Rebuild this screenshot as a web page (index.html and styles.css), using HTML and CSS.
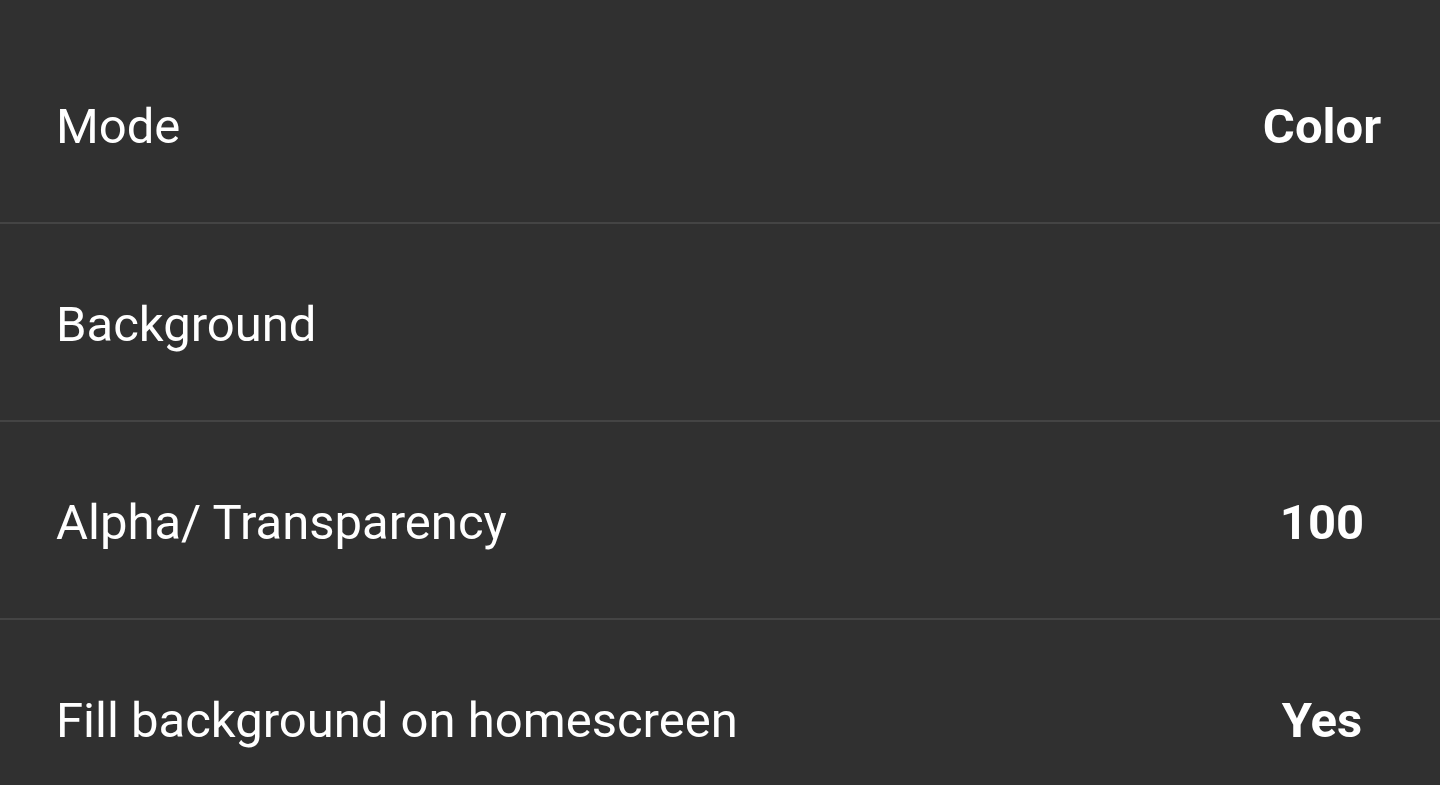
FILE: index.html
```html
<!DOCTYPE html>
<html>
<head>
<meta charset="utf-8">
<link rel="stylesheet" href="styles.css">
</head>
<body>
<div class="list">
  <div class="row">
    <span class="label">Mode</span>
    <span class="value">Color</span>
  </div>
  <div class="row">
    <span class="label">Background</span>
    <span class="value"></span>
  </div>
  <div class="row">
    <span class="label">Alpha/ Transparency</span>
    <span class="value">100</span>
  </div>
  <div class="row last">
    <span class="label">Fill background on homescreen</span>
    <span class="value">Yes</span>
  </div>
</div>
</body>
</html>
```

FILE: styles.css
```css
html, body {
  margin: 0;
  padding: 0;
  background: #303030;
  height: 100%;
  overflow: hidden;
}
.list {
  padding-top: 26px;
  font-family: Roboto, "Liberation Sans", sans-serif;
  color: #ffffff;
}
.row {
  display: flex;
  align-items: center;
  justify-content: space-between;
  height: 192px;
  border-bottom: 2px solid #444444;
  padding: 4px 43px 0 56px;
}
.row.last {
  border-bottom: none;
}
.label {
  font-size: 49px;
  font-weight: 400;
}
.value {
  font-size: 49px;
  font-weight: 700;
  width: 150px;
  text-align: center;
}
```
